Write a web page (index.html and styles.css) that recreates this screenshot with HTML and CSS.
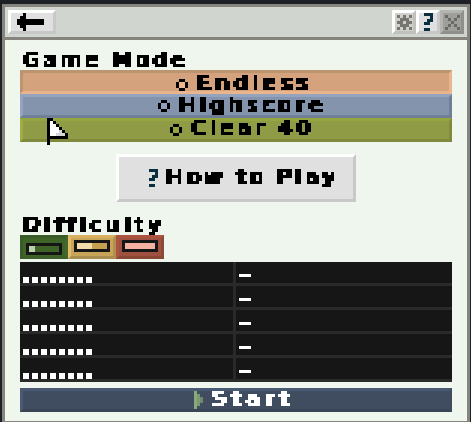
FILE: index.html
```html
<!DOCTYPE html>
<html lang="en">
<head>
<meta charset="utf-8">
<title>Game Mode</title>
<link rel="stylesheet" href="styles.css">
</head>
<body>
<svg class="defs" width="0" height="0" aria-hidden="true">
  <filter id="px" x="0" y="0" width="100%" height="100%" filterUnits="objectBoundingBox" primitiveUnits="userSpaceOnUse" color-interpolation-filters="sRGB">
    <feGaussianBlur in="SourceGraphic" stdDeviation="0.6" result="soft"/>
    <feFlood x="1" y="1" width="1" height="1" flood-color="#000"/>
    <feComposite width="3" height="3"/>
    <feTile result="grid"/>
    <feComposite in="soft" in2="grid" operator="in"/>
    <feMorphology operator="dilate" radius="1"/>
    <feComponentTransfer><feFuncA type="discrete" tableValues="0 1"/></feComponentTransfer>
  </filter>
  <filter id="px-sharp" x="0" y="0" width="100%" height="100%" filterUnits="objectBoundingBox" primitiveUnits="userSpaceOnUse" color-interpolation-filters="sRGB">
    <feFlood x="1" y="1" width="1" height="1" flood-color="#000"/>
    <feComposite width="3" height="3"/>
    <feTile result="grid"/>
    <feComposite in="SourceGraphic" in2="grid" operator="in"/>
    <feMorphology operator="dilate" radius="1"/>
    <feComponentTransfer><feFuncA type="discrete" tableValues="0 1"/></feComponentTransfer>
  </filter>
</svg>
<div class="window">
  <header class="titlebar">
    <button class="tool back" aria-label="Back">
      <svg width="27" height="18" viewBox="0 0 27 18" shape-rendering="crispEdges"><path d="M6 0h3v18H6zM3 3h3v12H3zM0 6h3v6H0zM9 6h18v6H9z"/></svg>
    </button>
    <div class="tools">
      <button class="tool small gear" aria-label="Settings">
        <svg width="15" height="15" viewBox="0 0 15 15" shape-rendering="crispEdges"><path fill="#77776f" d="M0 0h3v3H0zM6 0h3v3H6zM12 0h3v3h-3zM3 3h9v3H3zM0 6h6v3H0zM9 6h6v3H9zM3 9h9v3H3zM0 12h3v3H0zM6 12h3v3H6zM12 12h3v3h-3z"/></svg>
      </button>
      <button class="tool small help"><span class="glyph qmark">?</span></button>
      <button class="tool small close" aria-label="Close">
        <svg width="15" height="15" viewBox="0 0 15 15" shape-rendering="crispEdges"><path fill="#696965" d="M0 0h3v3H0zM12 0h3v3h-3zM3 3h3v3H3zM9 3h3v3H9zM6 6h3v3H6zM3 9h3v3H3zM9 9h3v3H9zM0 12h3v3H0zM12 12h3v3h-3z"/></svg>
      </button>
    </div>
  </header>
  <main class="content">
    <h2 class="label"><span class="glyph wide">Game Mode</span></h2>
    <div class="modes">
      <div class="mode endless">
        <svg class="radio" width="12" height="12" viewBox="0 0 12 12" shape-rendering="crispEdges"><path fill="currentColor" d="M3 3h6v6H3z"/><path d="M3 0h6v3H3zM0 3h3v6H0zM9 3h3v6H9zM3 9h6v3H3z"/></svg>
        <span class="glyph">Endless</span>
      </div>
      <div class="mode highscore">
        <svg class="radio" width="12" height="12" viewBox="0 0 12 12" shape-rendering="crispEdges"><path fill="currentColor" d="M3 3h6v6H3z"/><path d="M3 0h6v3H3zM0 3h3v6H0zM9 3h3v6H9zM3 9h6v3H3z"/></svg>
        <span class="glyph">Highscore</span>
      </div>
      <div class="mode clear">
        <svg class="radio" width="12" height="12" viewBox="0 0 12 12" shape-rendering="crispEdges"><path fill="currentColor" d="M3 3h6v6H3z"/><path d="M3 0h6v3H3zM0 3h3v6H0zM9 3h3v6H9zM3 9h6v3H3z"/></svg>
        <span class="glyph">Clear 40</span>
      </div>
    </div>
    <button class="howto"><span class="glyph qmark">?</span><span class="glyph howto-text">How to Play</span></button>
    <h2 class="label diff-label"><span class="glyph narrow">Difficulty</span></h2>
    <div class="levels">
      <button class="level easy" aria-label="Easy"><span class="meter"><span class="fill"></span></span></button>
      <button class="level medium" aria-label="Medium"><span class="meter"><span class="fill"></span></span></button>
      <button class="level hard" aria-label="Hard"><span class="meter"><span class="fill"></span></span></button>
    </div>
    <div class="scores">
      <div class="score"><span class="name">........</span><span class="value"><span class="dash">–</span></span></div>
      <div class="score"><span class="name">........</span><span class="value"><span class="dash">–</span></span></div>
      <div class="score"><span class="name">........</span><span class="value"><span class="dash">–</span></span></div>
      <div class="score"><span class="name">........</span><span class="value"><span class="dash">–</span></span></div>
      <div class="score"><span class="name">........</span><span class="value"><span class="dash">–</span></span></div>
    </div>
    <button class="start">
      <svg width="9" height="18" viewBox="0 0 9 18" shape-rendering="crispEdges"><path fill="#8aa878" d="M0 0h3v18H0z"/><path fill="#7c9a72" d="M3 3h3v12H3z"/><path fill="#6f8d6c" d="M6 6h3v6H6z"/></svg>
      <span class="glyph start-text">Start</span>
    </button>
  </main>
  <svg class="cursor" width="21" height="27" viewBox="0 0 21 27" shape-rendering="crispEdges" aria-hidden="true"><path d="M0 0h6v3h3v3h3v3h3v3h3v3h3v6H3v6H0z"/><path fill="#fff" d="M3 3h3v3h3v3h3v3h3v3h3v3H3z"/><path fill="#d8d8d8" d="M9 18h9v-3h-3v-3h-3v3H9z"/></svg>
</div>
</body>
</html>
```

FILE: styles.css
```css
* { box-sizing: border-box; }
html, body { margin: 0; height: 422px; overflow: hidden; }
body {
  background: #1d2125;
  padding: 4px 1px 0 2px;
  font-family: "DejaVu Sans", sans-serif;
  font-weight: 700;
  color: #000;
}
.defs { position: absolute; }
button { border: 0; padding: 0; margin: 0; font: inherit; color: inherit; }

.window {
  position: relative;
  height: 420px;
  border: 3px solid #85857d;
  background: #eff6ee;
}

.titlebar {
  display: flex;
  justify-content: space-between;
  height: 33px;
  padding: 3px;
  background: #d0d5cf;
  border-bottom: 3px solid #85857d;
}
.tools { display: flex; }
.tool {
  display: flex;
  align-items: center;
  justify-content: center;
  width: 48px;
  height: 24px;
  background: #e0e0e0;
  border-style: solid;
  border-width: 3px;
  border-color: #fff #c8c8c8 #c8c8c8 #fff;
}
.tool.back { padding-right: 3px; }
.tool.small { width: 24px; }
.tool.help { justify-content: flex-start; padding-left: 2px; }
.gear { background: #cfcfcc; border-color: #fff #c0c0bc #c0c0bc #fff; }
.close { background: #9e9e9b; border-color: #b4b4b0 #8e8e8b #8e8e8b #b4b4b0; }

.glyph {
  display: inline-block;
  flex: none;
  filter: url(#px);
  font-size: 21px;
  line-height: 22px;
  height: 24px;
  letter-spacing: 3.5px;
  -webkit-text-stroke: 0.2px currentColor;
  text-shadow: 0.7px 0 currentColor, -0.7px 0 currentColor;
  white-space: pre;
}
.qmark {
  width: 15px;
  color: #0a3040;
  letter-spacing: 0;
  font-size: 24px;
  line-height: 26.4px;
  -webkit-text-stroke: 0.3px currentColor;
  text-shadow: none;
  filter: url(#px-sharp);
}

.content {
  display: flex;
  flex-direction: column;
  padding: 12px 15px 0;
}
.label {
  margin: 0;
  height: 18px;
  padding-left: 3px;
  font-size: 21px;
  font-weight: 700;
  line-height: 22px;
}
.label .glyph { vertical-align: top; margin-top: -3px; }
.glyph.wide { letter-spacing: 2.8px; width: 168px; }
.glyph.narrow { letter-spacing: 3.3px; width: 144px; }
.diff-label { margin-top: 15px; }

.modes { display: flex; flex-direction: column; }
.mode {
  display: flex;
  align-items: center;
  justify-content: center;
  gap: 9px;
  height: 24px;
  padding-left: 15px;
  border-style: solid;
  border-width: 3px;
}
.endless { background: #d4a27c; border-color: #bd9470 #eab48c #eab48c #bd9470; }
.highscore { background: #8394ac; border-color: #94a4bf #6f7f97 #6f7f97 #94a4bf; }
.clear { background: #909b45; border-color: #93a63f #808a3c #808a3c #a0ad45; }
.endless .radio { color: #f4b48c; margin-top: 6px; }
.highscore .radio { color: #8fa0bc; }
.clear .radio { color: #93a63f; }
.endless .glyph { width: 114px; height: 22px; margin-top: 2px; }
.highscore .glyph { width: 150px; letter-spacing: 3.1px; }
.clear .glyph { width: 126px; margin-bottom: 2px; letter-spacing: 3.1px; }

.howto {
  display: flex;
  align-items: center;
  justify-content: center;
  gap: 5px;
  align-self: center;
  width: 240px;
  height: 48px;
  margin-top: 12px;
  padding-left: 11px;
  background: #e0e0e0;
  border-style: solid;
  border-width: 3px;
  border-color: #fff #c8c8c8 #c8c8c8 #fff;
}
.howto-text { width: 171px; letter-spacing: 2.9px; text-align: left; }

.levels { display: flex; }
.level {
  display: flex;
  align-items: center;
  justify-content: center;
  width: 48px;
  height: 24px;
  border-style: solid;
  border-width: 3px;
}
.easy { background: #3f6427; border-color: #3a5a28 #44682c #3f5f28 #3a5a28; padding: 3px 0 0 0; }
.medium { background: #c8a458; border-color: #d8b060 #b09050 #a88c50 #e4bc68; padding-bottom: 3px; }
.hard { background: #a05040; border-color: #ac5440 #8c4a38 #8a4834 #ac5440; padding-bottom: 3px; }
.meter { display: block; flex: none; width: 36px; height: 12px; border: 3px solid #161616; }
.fill { display: block; height: 6px; }
.easy .fill { background: linear-gradient(90deg, #bcd0ac 6px, #3f6427 6px); }
.medium .fill { background: linear-gradient(90deg, #f4dcaa 15px, #c4a050 15px); }
.hard .fill { background: #f4b0a0; }

.scores { margin-top: 3px; background: #161616; }
.score {
  display: grid;
  grid-template-columns: 213px 1fr;
  height: 24px;
  border-bottom: 3px solid #2a2a2a;
  color: #fff;
}
.name {
  display: block;
  margin-left: 3px;
  height: 21px;
  font-family: "DejaVu Sans Mono", monospace;
  font-size: 14px;
  line-height: 30px;
  letter-spacing: 0.57px;
  text-indent: -1.2px;
  -webkit-text-stroke: 3.5px currentColor;
  filter: url(#px-sharp);
}
.value { border-left: 3px solid #2a2a2a; padding-left: 3px; }
.dash {
  display: block;
  width: 12px;
  height: 21px;
  font-family: "DejaVu Sans Mono", monospace;
  font-size: 20px;
  line-height: 25px;
  -webkit-text-stroke: 0.5px currentColor;
  filter: url(#px-sharp);
}

.start {
  display: flex;
  align-items: center;
  justify-content: center;
  gap: 9px;
  height: 24px;
  margin-top: 6px;
  padding-left: 18px;
  background: #404c60;
  color: #fff;
  border-style: solid;
  border-width: 3px;
  border-color: #4a5a74 #404c60 #3a4454 #4a5a74;
}
.start-text { width: 84px; letter-spacing: 4.5px; text-align: left; }

.cursor { position: absolute; left: 42px; top: 111px; }
```
